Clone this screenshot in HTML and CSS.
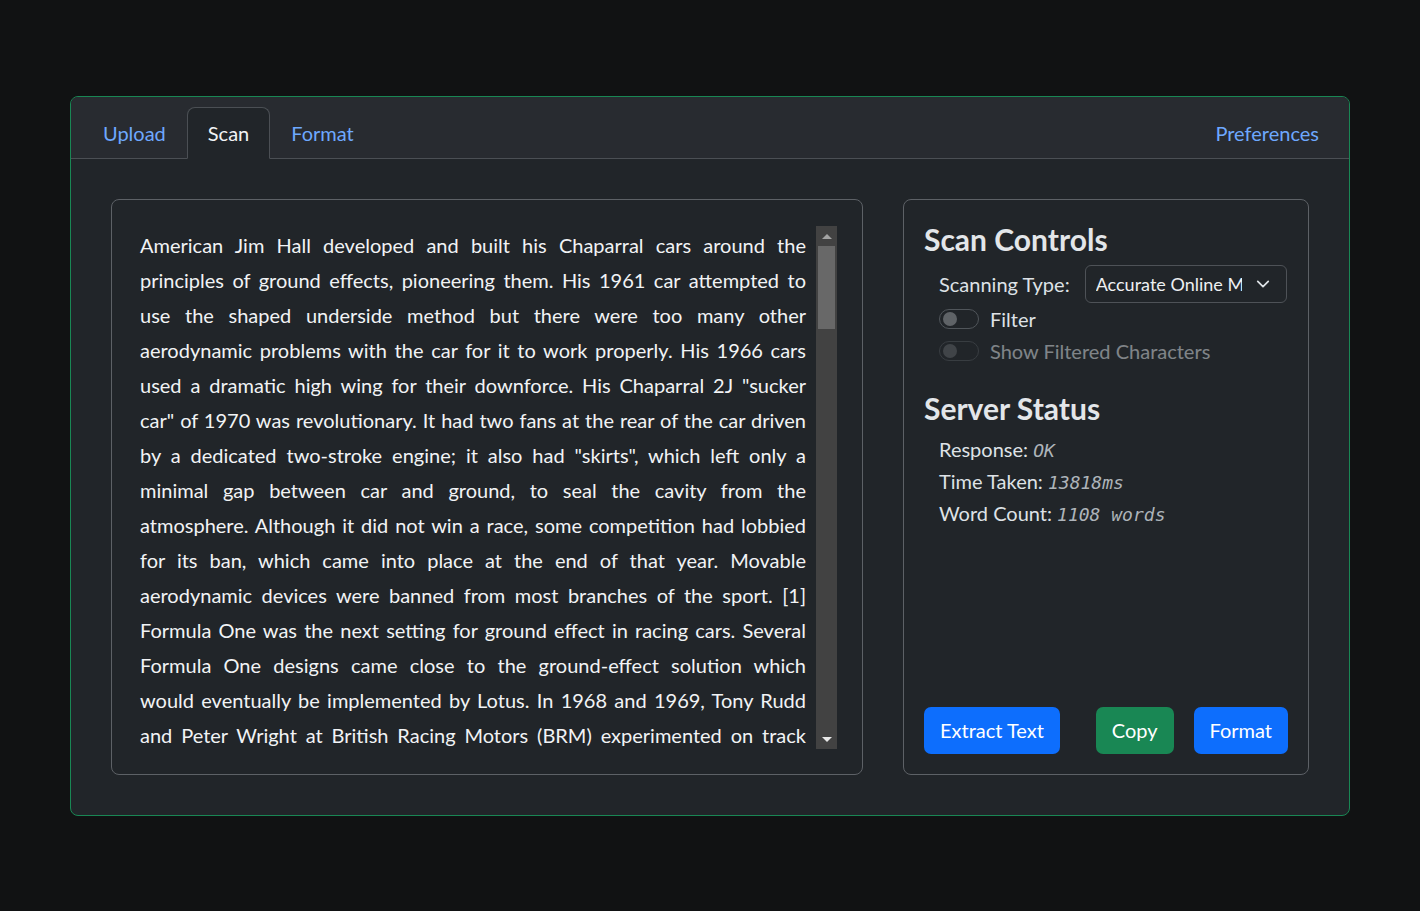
FILE: index.html
```
<!DOCTYPE html>
<html lang="en">
<head>
<meta charset="utf-8">
<title>Scan</title>
<link rel="stylesheet" href="styles.css">
</head>
<body>
<div class="card">
  <div class="card-header">
    <nav class="tabs">
      <a class="tab">Upload</a>
      <a class="tab active">Scan</a>
      <a class="tab">Format</a>
      <a class="tab push">Preferences</a>
    </nav>
  </div>
  <div class="card-body">
    <section class="panel text-panel">
      <div class="scroll">
        <div class="text">
          <div class="ln">American Jim Hall developed and built his Chaparral cars around the</div>
          <div class="ln">principles of ground effects, pioneering them. His 1961 car attempted to</div>
          <div class="ln">use the shaped underside method but there were too many other</div>
          <div class="ln">aerodynamic problems with the car for it to work properly. His 1966 cars</div>
          <div class="ln">used a dramatic high wing for their downforce. His Chaparral 2J "sucker</div>
          <div class="ln">car" of 1970 was revolutionary. It had two fans at the rear of the car driven</div>
          <div class="ln">by a dedicated two-stroke engine; it also had "skirts", which left only a</div>
          <div class="ln">minimal gap between car and ground, to seal the cavity from the</div>
          <div class="ln">atmosphere. Although it did not win a race, some competition had lobbied</div>
          <div class="ln">for its ban, which came into place at the end of that year. Movable</div>
          <div class="ln">aerodynamic devices were banned from most branches of the sport. [1]</div>
          <div class="ln">Formula One was the next setting for ground effect in racing cars. Several</div>
          <div class="ln">Formula One designs came close to the ground-effect solution which</div>
          <div class="ln">would eventually be implemented by Lotus. In 1968 and 1969, Tony Rudd</div>
          <div class="ln">and Peter Wright at British Racing Motors (BRM) experimented on track</div>
        </div>
        <div class="scrollbar">
          <div class="sb-btn"><span class="tri up"></span></div>
          <div class="sb-track"><div class="sb-thumb"></div></div>
          <div class="sb-btn"><span class="tri down"></span></div>
        </div>
      </div>
    </section>
    <section class="panel controls">
      <h4 class="heading">Scan Controls</h4>
      <div class="group">
        <div class="row-type">
          <span class="label">Scanning Type:</span>
          <div class="select">
            <span class="select-text">Accurate Online M</span>
            <svg class="chev" width="16" height="16" viewBox="0 0 16 16"><path d="M2 5l6 6 6-6" fill="none" stroke="#dee2e6" stroke-width="2" stroke-linecap="round" stroke-linejoin="round"/></svg>
          </div>
        </div>
        <div class="switch-row"><span class="switch"><span class="knob"></span></span><span>Filter</span></div>
        <div class="switch-row disabled"><span class="switch"><span class="knob"></span></span><span>Show Filtered Characters</span></div>
      </div>
      <h4 class="heading second">Server Status</h4>
      <div class="group status">
        <div class="stat">Response: <code>OK</code></div>
        <div class="stat">Time Taken: <code>13818ms</code></div>
        <div class="stat">Word Count: <code>1108 words</code></div>
      </div>
      <div class="actions">
        <button class="btn blue">Extract Text</button>
        <div class="btn-pair">
          <button class="btn green">Copy</button>
          <button class="btn blue">Format</button>
        </div>
      </div>
    </section>
  </div>
</div>
</body>
</html>
```
FILE: styles.css
```
* { box-sizing: border-box; }
html, body { margin: 0; }
body {
  background: #111213;
  padding: 96px 70px 95px;
  font-family: "Lato", "Open Sans", sans-serif;
  font-size: 20px;
  line-height: 30px;
  color: #dee2e6;
}
.card {
  border: 1px solid #198754;
  border-radius: 8px;
  background: #212529;
  overflow: hidden;
}
.card-header {
  background: #282b30;
  border-bottom: 1px solid #4b4f54;
  padding: 10px 9px 0 11px;
}
.tabs { display: flex; margin-bottom: -1px; }
.tab {
  display: block;
  padding: 10px 20px;
  border: 1px solid transparent;
  border-top-left-radius: 8px;
  border-top-right-radius: 8px;
  color: #6ea8fe;
  cursor: pointer;
}
.tab.active {
  background: #212529;
  border-color: #4b4f54 #4b4f54 #212529;
  color: #f1f3f5;
}
.tab.push { margin-left: auto; }
.card-body {
  display: grid;
  grid-template-columns: 752px 406px;
  gap: 40px;
  padding: 40px;
}
.panel {
  border: 1px solid #5d6166;
  border-radius: 8px;
  height: 576px;
}
.text-panel { padding: 26px 25px 25px 27px; }
.scroll { display: flex; height: 523px; }
.text {
  flex: 1;
  overflow: hidden;
  padding: 2px 10px 0 1px;
  line-height: 35px;
  color: #f1f3f5;
}
.ln { text-align: justify; text-align-last: justify; white-space: nowrap; }
.scrollbar {
  width: 21px;
  background: #424242;
  display: flex;
  flex-direction: column;
}
.sb-btn { height: 20px; display: flex; align-items: center; justify-content: center; }
.sb-track { flex: 1; padding: 0 2px; }
.sb-thumb { height: 83px; background: #686868; }
.tri { width: 0; height: 0; border-left: 5px solid transparent; border-right: 5px solid transparent; }
.tri.up { border-bottom: 5px solid #a3a3a3; }
.tri.down { border-top: 5px solid #e8e8e8; }
.controls {
  padding: 20px;
  display: flex;
  flex-direction: column;
}
.heading {
  margin: 1px 0 8px;
  font-size: 30px;
  line-height: 36px;
  font-weight: 700;
  color: #e3e6e9;
}
.heading.second { margin-top: 23px; margin-bottom: 7px; }
.group { padding-left: 15px; }
.row-type { display: flex; align-items: center; gap: 15px; }
.select {
  width: 202px;
  height: 38px;
  border: 1px solid #4e5257;
  border-radius: 6px;
  display: flex;
  align-items: center;
  padding: 0 16px 0 10px;
  font-size: 18px;
  color: #eef0f2;
}
.select-text { width: 146px; overflow: hidden; white-space: nowrap; }
.chev { margin-left: auto; width: 14px; height: 14px; }
.switch-row { display: flex; align-items: center; height: 32px; gap: 11px; }
.switch-row.disabled { opacity: .5; }
.switch {
  width: 40px;
  height: 20px;
  border: 1px solid #50555a;
  border-radius: 10px;
  display: flex;
  align-items: center;
  padding-left: 3px;
}
.knob { width: 14px; height: 14px; border-radius: 50%; background: #5f6367; }
.stat { height: 32px; line-height: 32px; }
code {
  font-family: "DejaVu Sans Mono", monospace;
  font-style: oblique;
  font-size: 18px;
  line-height: 1;
  color: #aeb4ba;
}
.actions {
  margin-top: auto;
  display: flex;
  justify-content: space-between;
}
.btn-pair { display: flex; gap: 20px; }
.btn {
  font: inherit;
  line-height: 29px;
  padding: 8px 15px;
  border: 1px solid transparent;
  border-radius: 7px;
  color: #fff;
}
.btn.blue { background: #0d6efd; }
.btn.green { background: #198754; }
```
